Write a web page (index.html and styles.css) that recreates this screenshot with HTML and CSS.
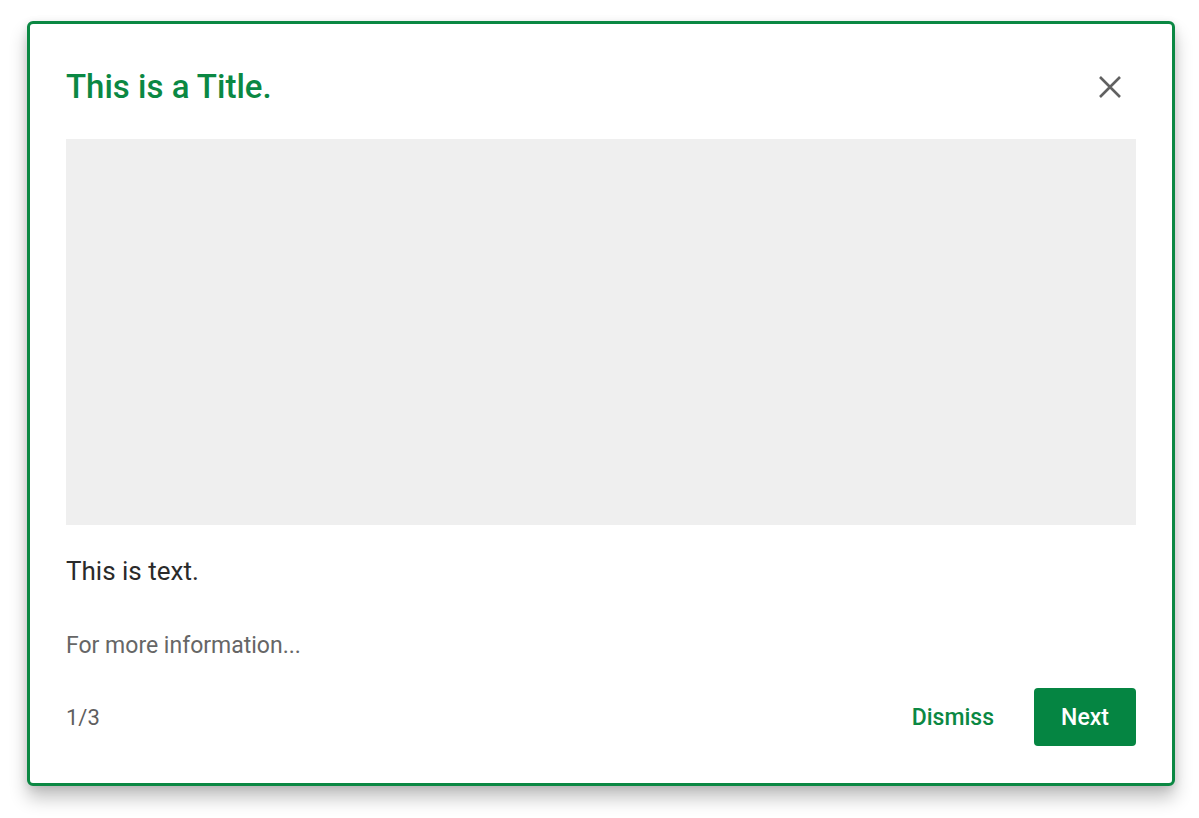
FILE: index.html
```html
<!DOCTYPE html>
<html>
<head>
<meta charset="utf-8">
<link rel="stylesheet" href="styles.css">
</head>
<body>
<div class="card">
  <div class="header">
    <h1 class="title">This is a Title.</h1>
    <button class="close" aria-label="Close">
      <svg width="24" height="24" viewBox="0 0 24 24"><path d="M2 2 L22 22 M22 2 L2 22" stroke="#616161" stroke-width="2.6" fill="none"/></svg>
    </button>
  </div>
  <div class="media"></div>
  <p class="text">This is text.</p>
  <p class="more">For more information...</p>
  <div class="footer">
    <span class="count">1/3</span>
    <div class="actions">
      <button class="dismiss">Dismiss</button>
      <button class="next">Next</button>
    </div>
  </div>
</div>
</body>
</html>
```
FILE: styles.css
```css
html, body { margin: 0; padding: 0; background: #fff; }
body {
  font-family: Roboto, "Noto Sans", sans-serif;
  min-height: 818px;
  padding: 21px 0 32px 27px;
  box-sizing: border-box;
}
.card {
  box-sizing: border-box;
  width: 1148px;
  height: 765px;
  border: 3px solid #0b8843;
  border-radius: 6px;
  background: #fff;
  padding: 39px 36px 37px 36px;
  box-shadow: 0 12px 18px rgba(0,0,0,0.24), 0 2px 8px rgba(0,0,0,0.1);
  display: flex;
  flex-direction: column;
}
.header {
  height: 48px;
  display: flex;
  align-items: center;
  justify-content: space-between;
}
.title {
  margin: 0;
  font-size: 33px;
  font-weight: 500;
  color: #0b8843;
  line-height: 40px;
}
.close {
  border: 0; background: none; padding: 0; margin-right: 14px;
  width: 24px; height: 24px; display: flex;
}
.media {
  margin-top: 28px;
  height: 386px;
  background: #efefef;
}
.text {
  margin: 30px 0 0 0;
  font-size: 26px;
  line-height: 32px;
  color: #2a2a2a;
}
.more {
  margin: 44px 0 0 0;
  font-size: 23px;
  line-height: 30px;
  color: #666;
}
.footer {
  margin-top: 27px;
  display: flex;
  align-items: center;
  justify-content: space-between;
}
.count { font-size: 22px; color: #5f5f5f; }
.actions { display: flex; align-items: center; gap: 40px; }
.dismiss {
  border: 0; background: none; padding: 0;
  font-family: inherit; font-size: 23px; font-weight: 500; color: #0b8843;
}
.next {
  border: 0; border-radius: 4px;
  width: 102px; height: 58px;
  background: #058542; color: #fff;
  font-family: inherit; font-size: 23px; font-weight: 500;
}
```
